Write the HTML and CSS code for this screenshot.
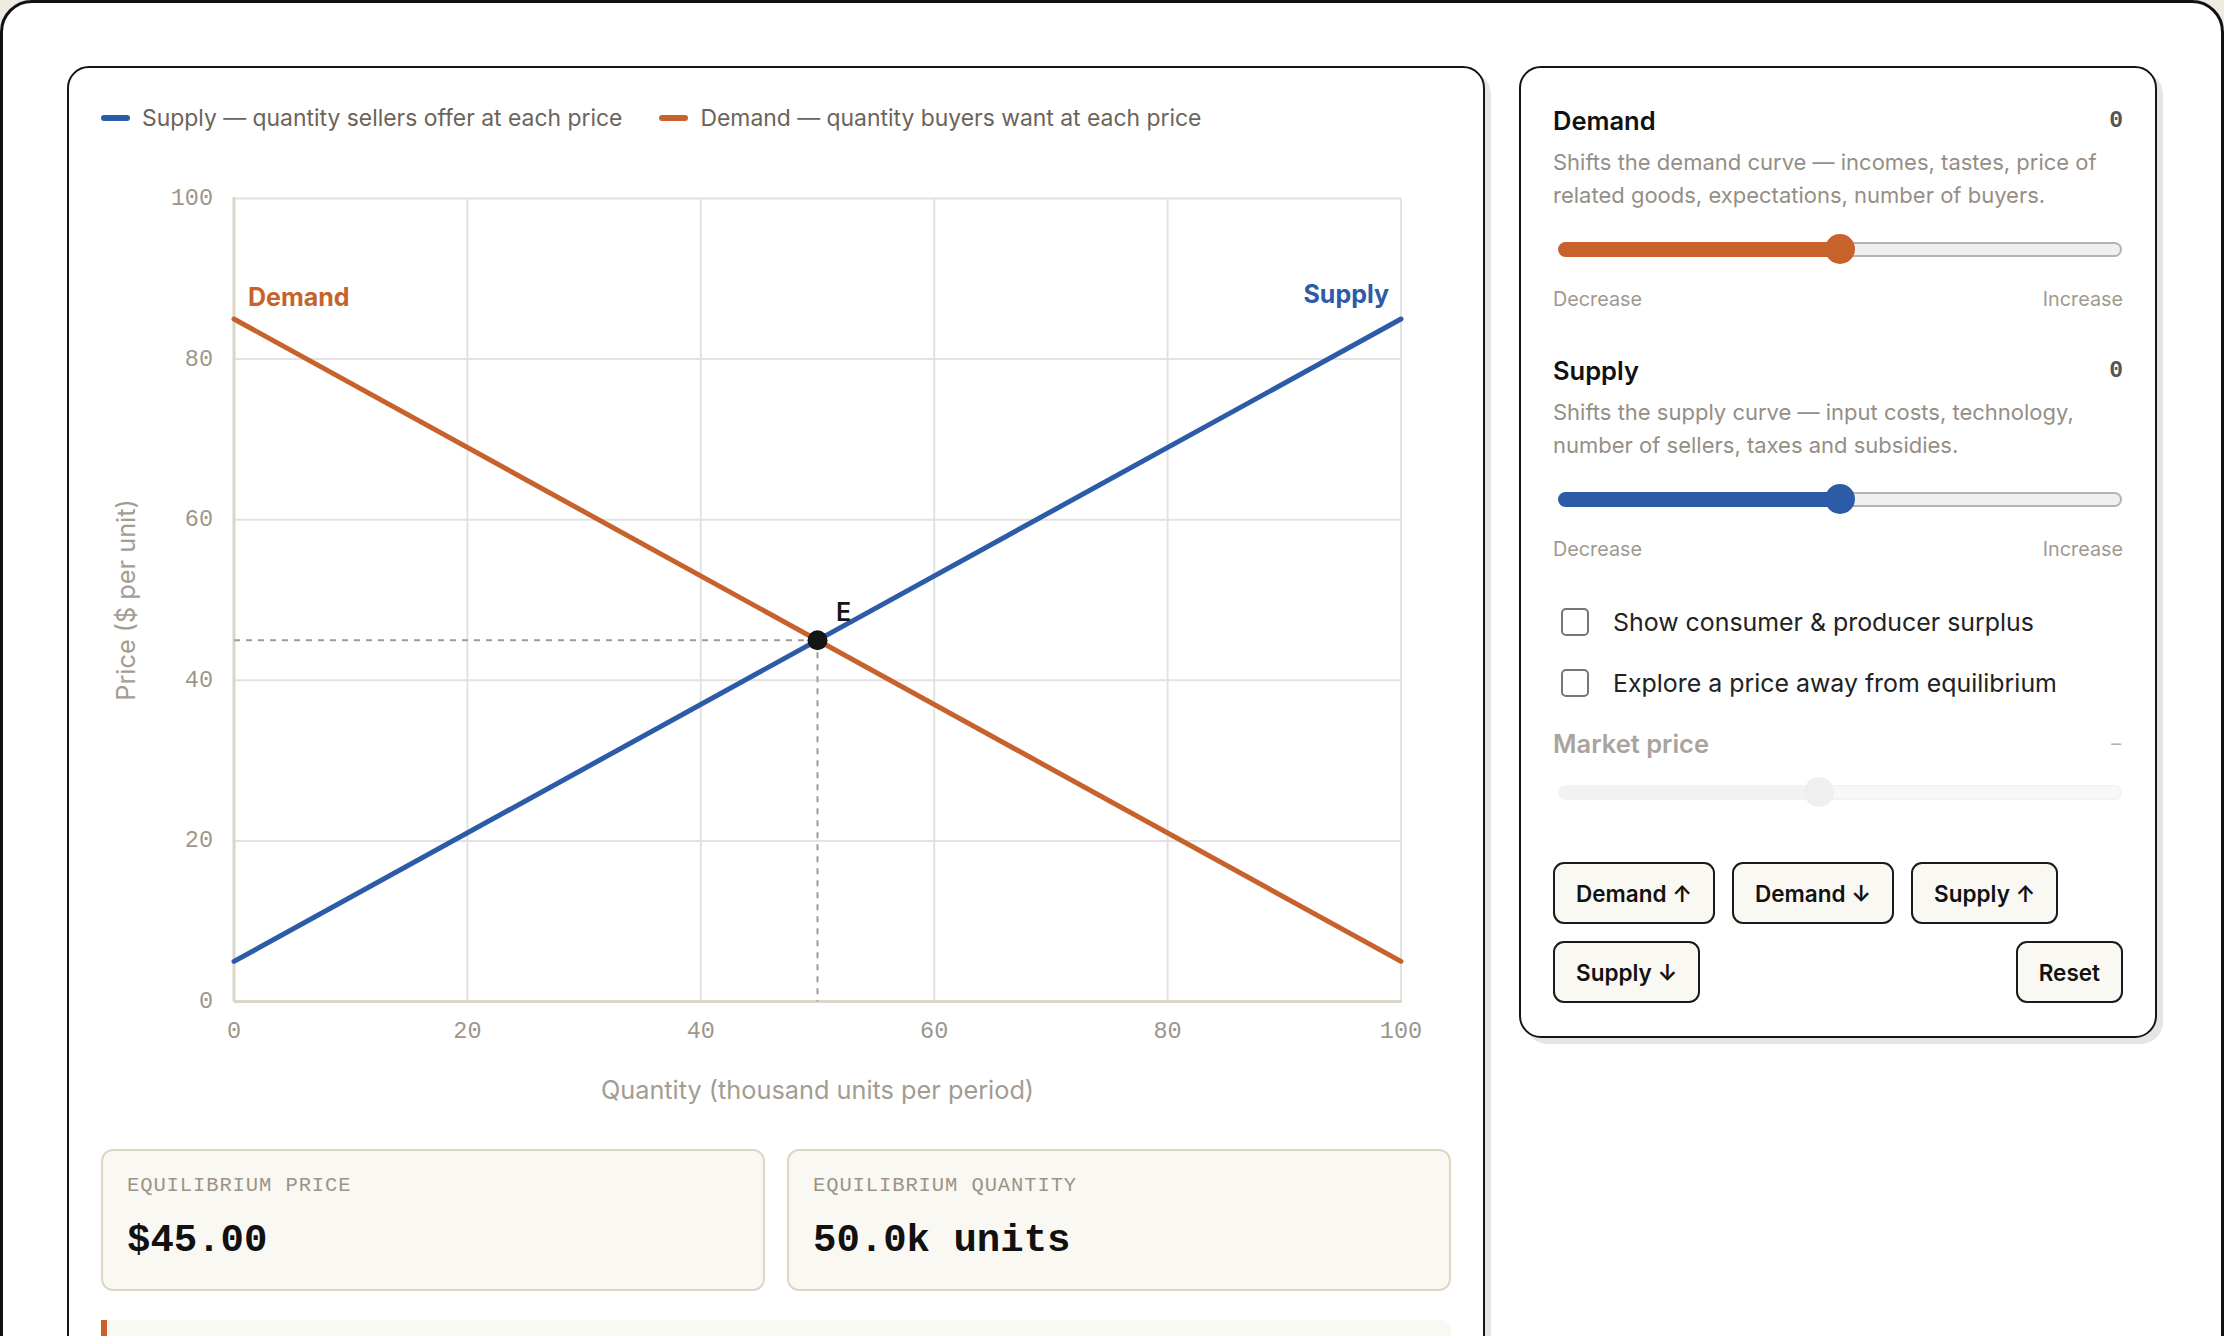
FILE: index.html
```html
<!DOCTYPE html>
<html lang="en">
<head>
<meta charset="utf-8">
<title>Supply and Demand</title>
<link rel="stylesheet" href="styles.css">
</head>
<body>
<div class="window">
  <div class="layout">
    <section class="card chart-card">
      <div class="legend">
        <span class="legend-item"><span class="swatch swatch-supply"></span>Supply — quantity sellers offer at each price</span>
        <span class="legend-item"><span class="swatch swatch-demand"></span>Demand — quantity buyers want at each price</span>
      </div>
      <svg class="chart" viewBox="0 0 1350 975" width="1350" height="975" xmlns="http://www.w3.org/2000/svg">
        <g class="grid">
          <line x1="366.4" y1="48.5" x2="366.4" y2="851.5"/>
          <line x1="599.8" y1="48.5" x2="599.8" y2="851.5"/>
          <line x1="833.2" y1="48.5" x2="833.2" y2="851.5"/>
          <line x1="1066.6" y1="48.5" x2="1066.6" y2="851.5"/>
          <line x1="1300" y1="48.5" x2="1300" y2="851.5"/>
          <line x1="133" y1="48.5" x2="1300" y2="48.5"/>
          <line x1="133" y1="209.1" x2="1300" y2="209.1"/>
          <line x1="133" y1="369.7" x2="1300" y2="369.7"/>
          <line x1="133" y1="530.3" x2="1300" y2="530.3"/>
          <line x1="133" y1="690.9" x2="1300" y2="690.9"/>
        </g>
        <g class="axis">
          <line x1="133" y1="47" x2="133" y2="851.5"/>
          <line x1="133" y1="851.5" x2="1301" y2="851.5"/>
        </g>
        <g class="tick tick-y">
          <text x="112" y="48.5">100</text>
          <text x="112" y="209.1">80</text>
          <text x="112" y="369.7">60</text>
          <text x="112" y="530.3">40</text>
          <text x="112" y="690.9">20</text>
          <text x="112" y="851.5">0</text>
        </g>
        <g class="tick tick-x">
          <text x="133" y="881">0</text>
          <text x="366.4" y="881">20</text>
          <text x="599.8" y="881">40</text>
          <text x="833.2" y="881">60</text>
          <text x="1066.6" y="881">80</text>
          <text x="1300" y="881">100</text>
        </g>
        <text class="axis-title" transform="translate(24 450) rotate(-90)">Price ($ per unit)</text>
        <text class="axis-title" x="716.5" y="939">Quantity (thousand units per period)</text>
        <g class="guides">
          <line x1="133" y1="490.2" x2="716.5" y2="490.2"/>
          <line x1="716.5" y1="490.2" x2="716.5" y2="851.5"/>
        </g>
        <line class="curve curve-demand" x1="133" y1="169" x2="1300" y2="811.4"/>
        <line class="curve curve-supply" x1="133" y1="811.4" x2="1300" y2="169"/>
        <circle class="eq-point" cx="716.5" cy="490.2" r="10"/>
        <text class="eq-label" x="735" y="462">E</text>
        <text class="curve-label label-demand" x="147" y="147">Demand</text>
        <text class="curve-label label-supply" x="1288" y="144">Supply</text>
      </svg>
      <div class="stats">
        <div class="stat">
          <div class="stat-label">EQUILIBRIUM PRICE</div>
          <div class="stat-value">$45.00</div>
        </div>
        <div class="stat">
          <div class="stat-label">EQUILIBRIUM QUANTITY</div>
          <div class="stat-value">50.0k units</div>
        </div>
      </div>
      <div class="note"></div>
    </section>

    <aside class="card controls">
      <div class="control">
        <div class="control-head">
          <h3 class="control-title">Demand</h3>
          <span class="control-value">0</span>
        </div>
        <p class="control-desc">Shifts the demand curve — incomes, tastes, price of related goods, expectations, number of buyers.</p>
        <input class="range range-demand" type="range" min="-50" max="50" value="0" style="--fill: 50%">
        <div class="range-labels"><span>Decrease</span><span>Increase</span></div>
      </div>

      <div class="control">
        <div class="control-head">
          <h3 class="control-title">Supply</h3>
          <span class="control-value">0</span>
        </div>
        <p class="control-desc">Shifts the supply curve — input costs, technology, number of sellers, taxes and subsidies.</p>
        <input class="range range-supply" type="range" min="-50" max="50" value="0" style="--fill: 50%">
        <div class="range-labels"><span>Decrease</span><span>Increase</span></div>
      </div>

      <label class="check"><input type="checkbox"><span>Show consumer &amp; producer surplus</span></label>
      <label class="check check-second"><input type="checkbox"><span>Explore a price away from equilibrium</span></label>

      <div class="control control-disabled">
        <div class="control-head">
          <h3 class="control-title">Market price</h3>
          <span class="control-value">–</span>
        </div>
        <input class="range range-price" type="range" min="0" max="100" value="46" disabled style="--fill: 46%">
      </div>

      <div class="buttons">
        <button class="btn" type="button">Demand ↑</button>
        <button class="btn" type="button">Demand ↓</button>
        <button class="btn" type="button">Supply ↑</button>
        <button class="btn" type="button">Supply ↓</button>
        <button class="btn btn-reset" type="button">Reset</button>
      </div>
    </aside>
  </div>
</div>
</body>
</html>
```
FILE: styles.css
```css
* { box-sizing: border-box; }

html, body {
  margin: 0;
  padding: 0;
}

body {
  background: #efebe3;
  font-family: Inter, "Noto Sans", sans-serif;
  color: #111;
  overflow: hidden;
}

.window {
  background: #fff;
  border: 3px solid #111;
  border-radius: 32px;
  min-height: 1600px;
  padding: 63px 64px;
}

.layout {
  display: grid;
  grid-template-columns: 1fr 638px;
  gap: 34px;
  align-items: start;
}

.card {
  background: #fff;
  border: 2px solid #151515;
  border-radius: 22px;
  box-shadow: 6px 6px 0 rgba(0, 0, 0, 0.1);
}

/* ---------- chart card ---------- */
.chart-card {
  padding: 33px 32px 40px;
}

.legend {
  display: flex;
  gap: 37px;
  font-size: 22.9px;
  line-height: 34px;
  color: #6b6459;
}

.legend-item {
  display: flex;
  align-items: center;
}

.swatch {
  width: 29px;
  height: 6px;
  border-radius: 3px;
  margin-right: 12px;
}

.swatch-supply { background: #2c5ba8; }
.swatch-demand { background: #c8622c; }

.chart {
  display: block;
  margin-top: 15px;
  overflow: visible;
}

.grid line {
  stroke: #e2e2e2;
  stroke-width: 2;
}

.axis line {
  stroke: #dcd6c9;
  stroke-width: 3;
}

.tick text {
  font-family: "Liberation Mono", "DejaVu Sans Mono", monospace;
  font-size: 23.5px;
  fill: #9d968b;
  dominant-baseline: central;
}

.tick-y text { text-anchor: end; }
.tick-x text { text-anchor: middle; }

.axis-title {
  font-family: Inter, sans-serif;
  font-size: 25.3px;
  fill: #a39c91;
  text-anchor: middle;
  dominant-baseline: central;
}

.guides line {
  stroke: #a09a92;
  stroke-width: 2;
  stroke-dasharray: 6 6;
}

.curve {
  stroke-width: 5;
  stroke-linecap: round;
}

.curve-demand { stroke: #c8622c; }
.curve-supply { stroke: #2c5ba8; }

.eq-point { fill: #151515; }

.eq-label {
  font-family: Inter, sans-serif;
  font-weight: 600;
  font-size: 25px;
  fill: #151515;
  dominant-baseline: central;
}

.curve-label {
  font-family: Inter, sans-serif;
  font-weight: 700;
  font-size: 25px;
  dominant-baseline: central;
}

.label-demand { fill: #c8622c; }
.label-supply { fill: #2c5ba8; text-anchor: end; }

.stats {
  display: grid;
  grid-template-columns: 1fr 1fr;
  gap: 22px;
  margin-top: 24px;
}

.stat {
  background: #faf8f3;
  border: 2px solid #ded6c6;
  border-radius: 12px;
  height: 142px;
  padding: 22px 24px 0;
}

.stat-label {
  font-family: "Liberation Mono", "DejaVu Sans Mono", monospace;
  font-size: 20.5px;
  letter-spacing: 0.9px;
  line-height: 26px;
  color: #9b9488;
}

.stat-value {
  font-family: "Liberation Mono", "DejaVu Sans Mono", monospace;
  font-weight: 700;
  font-size: 39px;
  line-height: 46px;
  margin-top: 19px;
  color: #111;
}

.note {
  margin-top: 29px;
  height: 120px;
  background: #faf8f3;
  border-left: 6px solid #c8622c;
  border-radius: 0 10px 10px 0;
}

/* ---------- controls card ---------- */
.controls {
  padding: 38px 32px 33px;
}

.control + .control {
  margin-top: 45px;
}

.control-head {
  display: flex;
  justify-content: space-between;
  align-items: center;
  height: 30px;
}

.control-title {
  margin: 0;
  font-size: 25.5px;
  font-weight: 600;
  line-height: 30px;
  color: #111;
}

.control-value {
  font-family: "Liberation Mono", "DejaVu Sans Mono", monospace;
  font-size: 23px;
  font-weight: 700;
  color: #555;
}

.control-desc {
  margin: 10px 0 0;
  font-size: 22px;
  line-height: 32.6px;
  color: #958e85;
}

.range {
  -webkit-appearance: none;
  appearance: none;
  display: block;
  width: calc(100% - 6px);
  height: 30px;
  margin: 23px 0 0 5px;
  background: transparent;
  --c: #c8622c;
}

.range-supply { --c: #2c5ba8; }

.range::-webkit-slider-runnable-track {
  box-sizing: border-box;
  height: 15px;
  border-radius: 8px;
  border: 2px solid transparent;
  background:
    linear-gradient(to right, var(--c) 0, var(--c) var(--fill), transparent var(--fill)) border-box,
    linear-gradient(#efefef, #efefef) padding-box,
    #b3b3b3 border-box;
}

.range::-webkit-slider-thumb {
  -webkit-appearance: none;
  appearance: none;
  width: 30px;
  height: 30px;
  margin-top: -9.5px;
  border-radius: 50%;
  background: var(--c);
  border: none;
}

.range-price {
  margin-top: 18px;
}

.range-price::-webkit-slider-runnable-track {
  background:
    linear-gradient(to right, #f2f2f2 0, #f2f2f2 var(--fill), transparent var(--fill)) border-box,
    linear-gradient(#f8f8f8, #f8f8f8) padding-box,
    #f3f3f3 border-box;
}

.range-price::-webkit-slider-thumb {
  background: #efefef;
}

.range-labels {
  display: flex;
  justify-content: space-between;
  margin-top: 23px;
  font-size: 19.8px;
  line-height: 24px;
  color: #a0998f;
}

.check {
  display: flex;
  align-items: center;
  height: 34px;
  margin-top: 44px;
  font-size: 24.9px;
  color: #222;
}

.check-second {
  margin-top: 27px;
}

.check input {
  -webkit-appearance: none;
  appearance: none;
  width: 28px;
  height: 28px;
  margin: 0 24px 0 8px;
  border: 2px solid #767676;
  border-radius: 5px;
  background: #fff;
}

.control-disabled {
  margin-top: 29px;
}

.control-disabled .control-title { color: #aaa49c; }
.control-disabled .control-value { color: #b5b0a8; font-weight: 400; }

.buttons {
  display: flex;
  flex-wrap: wrap;
  gap: 17px;
  margin-top: 55px;
}

.btn {
  font-family: Inter, sans-serif;
  font-size: 22.5px;
  font-weight: 600;
  line-height: 27px;
  height: 62px;
  padding: 0 21px;
  color: #111;
  background: #faf8f3;
  border: 2px solid #1a1a1a;
  border-radius: 11px;
}

.btn-reset {
  margin-left: auto;
}
```
